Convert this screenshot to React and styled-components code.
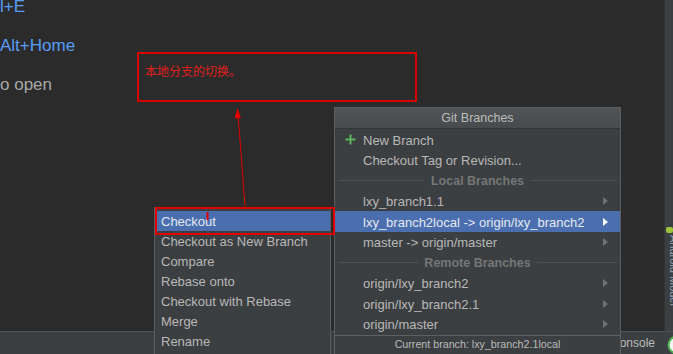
import React from 'react';
import styled, { createGlobalStyle } from 'styled-components';

const GlobalStyle = createGlobalStyle`
  body {
    margin: 0;
    background: #2b2b2b;
    overflow: hidden;
  }
`;

const Screen = styled.div`
  position: relative;
  width: 673px;
  height: 354px;
  overflow: hidden;
  display: flex;
  flex-direction: column;
  background: #2b2b2b;
  font-family: "Liberation Sans", Arial, sans-serif;
`;

const Workspace = styled.div`
  flex: 1;
  min-height: 0;
  display: flex;
`;

const Editor = styled.div`
  flex: 1;
  overflow: hidden;
`;

const Hints = styled.div`
  margin-top: -13px;
`;

const Hint = styled.div`
  font-size: 17px;
  line-height: 39px;
  white-space: nowrap;
  color: ${p => (p.$muted ? '#a9a9a9' : '#589df6')};
`;

const SideStrip = styled.div`
  width: 8px;
  flex-shrink: 0;
  background: #3c3f41;
  border-left: 1px solid #323436;
  overflow: hidden;
  padding-top: 225px;
  display: flex;
  flex-direction: column;
  gap: 2px;
`;

const StripLabel = styled.div`
  width: 18px;
  writing-mode: vertical-rl;
  font-size: 11px;
  line-height: 18px;
  color: #8c9fb2;
  white-space: nowrap;
`;

const StatusBar = styled.div`
  height: 22px;
  flex-shrink: 0;
  background: #3c3f41;
  border-top: 1px solid #4f5254;
  display: flex;
  align-items: center;
  justify-content: flex-end;
  gap: 12px;
  font-size: 12px;
  color: #bbbbbb;
`;

const StatusCircle = styled.svg`
  width: 20px;
  height: 20px;
  margin-right: -14px;
  margin-top: 4px;
`;

const Annotation = styled.div`
  position: absolute;
  left: 137px;
  top: 52px;
  width: 280px;
  height: 50px;
  box-sizing: border-box;
  border: 2px solid #d80000;
  padding: 9px 6px;
  font-family: "Noto Sans CJK SC", sans-serif;
  font-size: 12px;
  line-height: 16px;
  color: #e0201c;
`;

const Highlight = styled.div`
  position: absolute;
  left: 155px;
  top: 207px;
  width: 180px;
  height: 28px;
  box-sizing: border-box;
  border: 2px solid #e00000;
  z-index: 3;
`;

const ArrowLayer = styled.svg`
  position: absolute;
  left: 0;
  top: 0;
  width: 673px;
  height: 354px;
  pointer-events: none;
  z-index: 4;
`;

const ActionMenu = styled.div`
  position: absolute;
  left: 154px;
  top: 207px;
  width: 177px;
  height: 160px;
  box-sizing: border-box;
  background: #3c3f41;
  border: 1px solid #5a5d5f;
  padding-top: 3px;
  z-index: 2;
`;

const ActionItem = styled.div`
  height: 20px;
  line-height: 22px;
  padding-left: 6px;
  font-size: 13px;
  white-space: nowrap;
  color: ${p => (p.$active ? '#e4e9f1' : '#b8b8b8')};
  background: ${p => (p.$active ? '#4b6eaf' : 'transparent')};
`;

const BranchPopup = styled.div`
  position: absolute;
  left: 334px;
  top: 107px;
  width: 287px;
  height: 248px;
  box-sizing: border-box;
  background: #3c3f41;
  border: 1px solid #5c5f61;
  display: flex;
  flex-direction: column;
  z-index: 2;
`;

const PopupTitle = styled.div`
  height: 20px;
  line-height: 21px;
  text-align: center;
  font-size: 12.5px;
  color: #bbbbbb;
  background: linear-gradient(#525557, #484b4d);
  border-bottom: 1px solid #323436;
`;

const BranchRow = styled.div`
  height: 20.5px;
  box-sizing: border-box;
  display: flex;
  align-items: center;
  padding: 1.5px 12px 0 28px;
  position: relative;
  font-size: 13px;
  white-space: nowrap;
  color: ${p => (p.$active ? '#e4e9f1' : '#b8b8b8')};
  background: ${p => (p.$active ? '#4b6eaf' : 'transparent')};
`;

const RowLabel = styled.span`
  flex: 1;
`;

const RowIcon = styled.svg`
  position: absolute;
  left: 10px;
  top: 5px;
  width: 11px;
  height: 11px;
`;

const SubArrow = styled.span`
  width: 0;
  height: 0;
  margin-top: -1px;
  border-top: 4px solid transparent;
  border-bottom: 4px solid transparent;
  border-left: 5px solid ${p => (p.$active ? '#ffffff' : '#6f7274')};
`;

const SectionRow = styled.div`
  height: 20.5px;
  box-sizing: border-box;
  display: flex;
  align-items: center;
  gap: 6px;
  padding: 1px 3px 0;
  font-size: 12.5px;
  font-weight: bold;
  color: #747677;

  &::before,
  &::after {
    content: '';
    flex: 1;
    height: 1px;
    margin-top: -1px;
    background: #4d5052;
  }
`;

const PopupFooter = styled.div`
  margin-top: 1px;
  border-top: 1px solid #5e6163;
  height: 18px;
  line-height: 17px;
  text-align: center;
  font-size: 10.7px;
  color: #bbbbbb;
`;

const actions = [
  'Checkout',
  'Checkout as New Branch',
  'Compare',
  'Rebase onto',
  'Checkout with Rebase',
  'Merge',
  'Rename',
];

const localBranches = [
  { name: 'lxy_branch1.1' },
  { name: 'lxy_branch2local -> origin/lxy_branch2', active: true },
  { name: 'master -> origin/master' },
];

const remoteBranches = ['origin/lxy_branch2', 'origin/lxy_branch2.1', 'origin/master'];

const App = () => (
  <>
    <GlobalStyle />
    <Screen>
      <Workspace>
        <Editor>
          <Hints>
            <Hint>l+E</Hint>
            <Hint>Alt+Home</Hint>
            <Hint $muted>o open</Hint>
          </Hints>
        </Editor>
        <SideStrip>
          <svg width="8" height="8" viewBox="0 0 8 8">
            <rect x="1" y="2" width="7" height="6" rx="2" fill="#9bc33b" />
          </svg>
          <StripLabel>Android Model</StripLabel>
        </SideStrip>
      </Workspace>
      <StatusBar>
        <span>Console</span>
        <StatusCircle viewBox="0 0 20 20">
          <circle cx="10" cy="10" r="8.5" fill="#f2f5f2" stroke="#4caf50" strokeWidth="2" />
        </StatusCircle>
      </StatusBar>

      <Annotation>本地分支的切换。</Annotation>

      <BranchPopup>
        <PopupTitle>Git Branches</PopupTitle>
        <BranchRow>
          <RowIcon viewBox="0 0 11 11">
            <path d="M5.5 0.5v10M0.5 5.5h10" stroke="#5fb35f" strokeWidth="2" />
          </RowIcon>
          <RowLabel>New Branch</RowLabel>
        </BranchRow>
        <BranchRow>
          <RowLabel>Checkout Tag or Revision...</RowLabel>
        </BranchRow>
        <SectionRow>Local Branches</SectionRow>
        {localBranches.map(b => (
          <BranchRow key={b.name} $active={b.active}>
            <RowLabel>{b.name}</RowLabel>
            <SubArrow $active={b.active} />
          </BranchRow>
        ))}
        <SectionRow>Remote Branches</SectionRow>
        {remoteBranches.map(name => (
          <BranchRow key={name}>
            <RowLabel>{name}</RowLabel>
            <SubArrow />
          </BranchRow>
        ))}
        <PopupFooter>Current branch: lxy_branch2.1local</PopupFooter>
      </BranchPopup>

      <ActionMenu>
        {actions.map((a, i) => (
          <ActionItem key={a} $active={i === 0}>{a}</ActionItem>
        ))}
      </ActionMenu>

      <Highlight />

      <ArrowLayer viewBox="0 0 673 354">
        <line x1="245" y1="206" x2="238" y2="114" stroke="#e00000" strokeWidth="1" />
        <polygon points="237.5,108 241,118 234.5,118.5" fill="#e00000" />
        <rect x="206.5" y="212" width="2" height="8" fill="#e00000" />
      </ArrowLayer>
    </Screen>
  </>
);

export default App;
